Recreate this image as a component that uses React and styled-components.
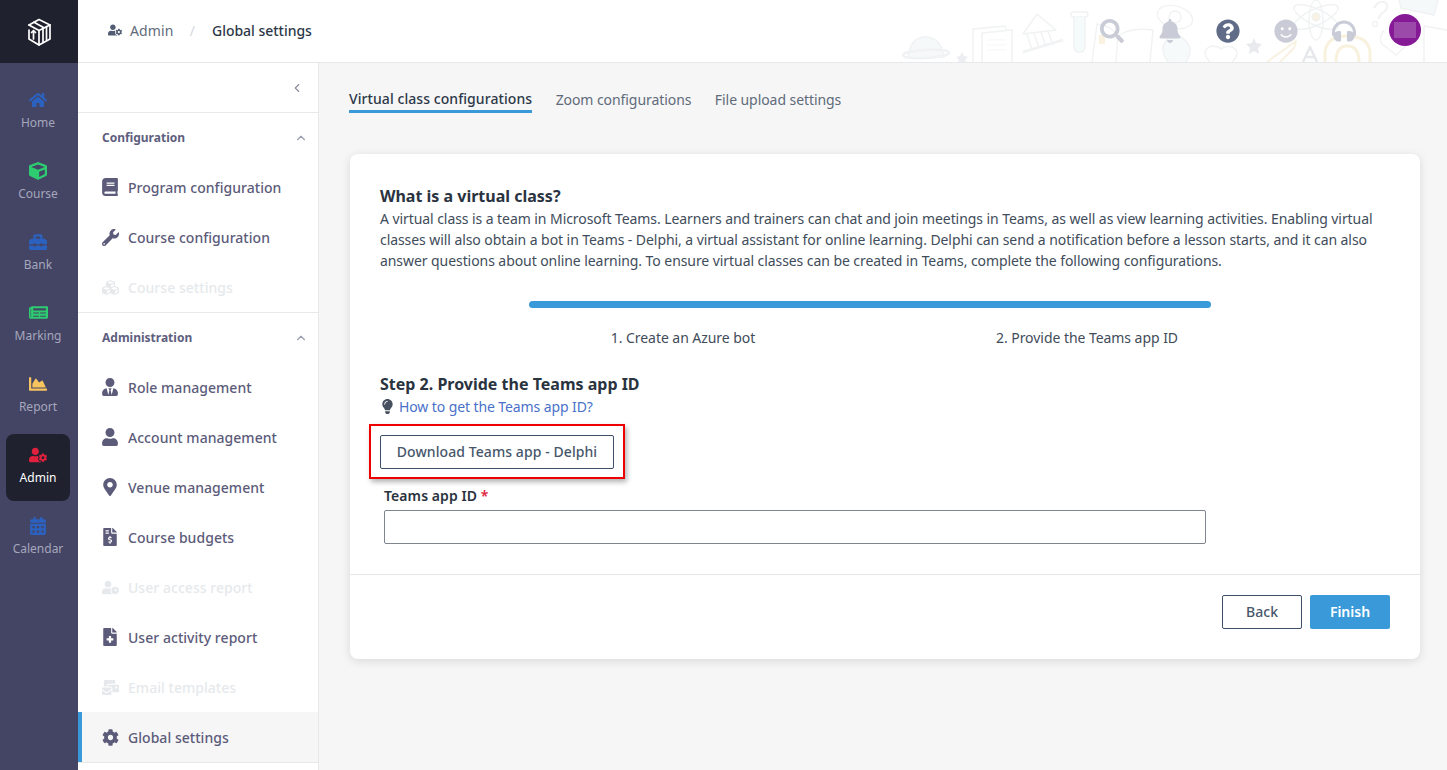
import React from 'react';
import styled, { createGlobalStyle } from 'styled-components';
import {
  FaHome, FaCube, FaToolbox, FaNewspaper, FaChartArea, FaUserCog, FaCalendarAlt,
  FaBook, FaWrench, FaCubes, FaUserTie, FaUser, FaMapMarkerAlt, FaFileInvoiceDollar,
  FaUserClock, FaFileMedical, FaMailBulk, FaCog, FaSearch, FaBell, FaQuestionCircle,
  FaSmile, FaHeadphones, FaLightbulb,
} from 'react-icons/fa';
import { FiChevronLeft, FiChevronUp } from 'react-icons/fi';

const GlobalStyle = createGlobalStyle`
  html, body { margin: 0; padding: 0; height: 100%; overflow: hidden; }
  body { font-family: "Noto Sans", "Open Sans", "Liberation Sans", sans-serif; background: #f6f6f6; }
  * { box-sizing: border-box; }
`;

const Page = styled.div`
  display: flex;
  width: 1447px;
  height: 770px;
  overflow: hidden;
`;

const Rail = styled.nav`
  width: 78px;
  flex-shrink: 0;
  background: #444565;
`;

const LogoBlock = styled.div`
  height: 63px;
  background: #20212f;
  display: flex;
  align-items: center;
  justify-content: center;
`;

const RailList = styled.div`
  display: flex;
  flex-direction: column;
  gap: 4px;
  padding: 16px 8px 0 6px;
`;

const RailItem = styled.div`
  height: 67px;
  border-radius: 8px;
  display: flex;
  flex-direction: column;
  align-items: center;
  padding-top: 11px;
  background: ${p => (p.$active ? '#20212f' : 'transparent')};
  color: ${p => (p.$active ? '#ffffff' : '#a5a7bc')};
  font-size: 12px;
  line-height: 18px;
  svg { color: ${p => p.$color}; display: block; }
`;

const RailIcon = styled.div`
  height: 19px;
  display: flex;
  align-items: center;
  margin-bottom: 5px;
`;

const Right = styled.div`
  flex: 1;
  display: flex;
  flex-direction: column;
  min-width: 0;
`;

const Header = styled.header`
  position: relative;
  height: 63px;
  flex-shrink: 0;
  background: #ffffff;
  border-bottom: 1px solid #e7e8ea;
  display: flex;
  align-items: center;
  justify-content: space-between;
  padding: 0 26px 2px 30px;
`;

const Doodles = styled.svg`
  position: absolute;
  right: 0;
  top: 0;
  width: 567px;
  height: 62px;
`;

const Crumbs = styled.div`
  display: flex;
  align-items: center;
  font-size: 14px;
  color: #5f6b7a;
  letter-spacing: 0.15px;
  svg { color: #525c74; margin-right: 8px; }
`;

const CrumbSep = styled.span`
  color: #d5d7db;
  margin: 0 17px 0 16px;
`;

const CrumbCurrent = styled.span`
  color: #2c3848;
  font-weight: 500;
  letter-spacing: -0.03px;
`;

const HeaderIcons = styled.div`
  position: relative;
  display: flex;
  align-items: center;
`;

const HeaderIcon = styled.div`
  width: 58px;
  padding-top: 1px;
  display: flex;
  justify-content: center;
  color: ${p => p.$color || '#c9ccd6'};
`;

const Avatar = styled.div`
  width: 32px;
  height: 32px;
  border-radius: 50%;
  margin-left: 16px;
  background: #861a96;
  display: flex;
  align-items: center;
  justify-content: center;
  &::after {
    content: '';
    width: 22px;
    height: 16px;
    background: #9b4aaa;
  }
`;

const Body = styled.div`
  flex: 1;
  display: flex;
  min-height: 0;
`;

const Sidebar = styled.aside`
  width: 241px;
  flex-shrink: 0;
  background: #ffffff;
  border-right: 1px solid #e7e8ea;
`;

const CollapseRow = styled.div`
  height: 50px;
  border-bottom: 1px solid #e7e8ea;
  display: flex;
  align-items: center;
  justify-content: flex-end;
  padding: 0 14px 0 0;
  color: #8a8ea3;
`;

const Group = styled.div`
  border-bottom: 1px solid #e7e8ea;
`;

const GroupTitle = styled.div`
  height: 49px;
  display: flex;
  align-items: center;
  justify-content: space-between;
  padding: 0 10px 0 24px;
  font-size: 12px;
  font-weight: 700;
  color: #5e5e7e;
  svg { color: #9a9db0; }
`;

const MenuItem = styled.div`
  height: 50px;
  display: flex;
  align-items: center;
  gap: 10px;
  padding-left: ${p => (p.$active ? '20px' : '24px')};
  border-left: ${p => (p.$active ? '4px solid #3a9ad9' : 'none')};
  background: ${p => (p.$active ? '#f6f6f6' : 'transparent')};
  font-size: 14px;
  font-weight: 500;
  letter-spacing: 0.04px;
  color: ${p => (p.$disabled ? '#e6e9ec' : '#5c5b7a')};
`;

const MenuIcon = styled.span`
  width: 16px;
  display: flex;
  justify-content: center;
  svg { flex-shrink: 0; }
`;

const Main = styled.main`
  flex: 1;
  min-width: 0;
  padding: 0 27px 0 30px;
  background: #f6f6f6;
`;

const Tabs = styled.div`
  display: flex;
  gap: 23.5px;
  padding-top: 24px;
  margin-bottom: 41px;
`;

const Tab = styled.div`
  height: 26px;
  font-size: 14px;
  line-height: 23px;
  padding-top: ${p => (p.$active ? '0' : '1px')};
  white-space: nowrap;
  font-weight: ${p => (p.$active ? 500 : 400)};
  letter-spacing: ${p => (p.$active ? '0.07px' : '-0.07px')};
  color: ${p => (p.$active ? '#2c3848' : '#5f6b7a')};
  border-bottom: 3px solid ${p => (p.$active ? '#3a9ad9' : 'transparent')};
`;

const Card = styled.section`
  width: 1070px;
  height: 505px;
  margin-left: 1px;
  background: #ffffff;
  border-radius: 8px;
  box-shadow: 0 2px 10px rgba(0, 0, 0, 0.12);
  display: flex;
  flex-direction: column;
`;

const CardBody = styled.div`
  flex: 1;
  padding: 30px 30px 0;
  border-bottom: 1px solid #e5e6e8;
`;

const Title = styled.h2`
  margin: 0;
  font-size: 16px;
  line-height: 24px;
  font-weight: 700;
  color: #2a3340;
`;

const Para = styled.p`
  margin: 0;
  font-size: 14px;
  line-height: 21px;
  letter-spacing: -0.07px;
  color: #414c5a;
`;

const Progress = styled.div`
  width: 682px;
  height: 7px;
  margin: 30px 0 0 149px;
  border-radius: 4px;
  background: #3a9ad9;
`;

const StepLabels = styled.div`
  display: grid;
  grid-template-columns: 404px 404px;
  margin: 19px 0 0 101px;
  font-size: 14px;
  line-height: 21px;
  letter-spacing: -0.05px;
  color: #414c5a;
  text-align: center;
`;

const Section = styled.div`
  margin-top: 24px;
`;

const HelpLink = styled.div`
  display: flex;
  align-items: center;
  gap: 4px;
  height: 21px;
  font-size: 14px;
  letter-spacing: -0.1px;
  color: #4a71c9;
  svg { color: #47505e; }
`;

const DownloadWrap = styled.div`
  position: relative;
  width: 234px;
  margin-top: 18px;
`;

const Highlight = styled.div`
  position: absolute;
  left: -11px;
  top: -11px;
  width: 256px;
  height: 55px;
  border: 2px solid #ee0000;
  box-shadow: 2px 3px 5px rgba(0, 0, 0, 0.3);
  pointer-events: none;
`;

const OutlineButton = styled.button`
  display: block;
  width: ${p => p.$width || '80px'};
  height: 34px;
  padding: 0 0 2px;
  font: 500 14px "Noto Sans", "Open Sans", sans-serif;
  letter-spacing: 0.08px;
  color: #47566a;
  background: #ffffff;
  border: 1px solid #3f5169;
  border-radius: 2px;
`;

const PrimaryButton = styled.button`
  display: block;
  width: 80px;
  height: 34px;
  padding: 0 0 2px;
  font: 600 14px "Noto Sans", "Open Sans", sans-serif;
  color: #ffffff;
  background: #3a9ad9;
  border: none;
  border-radius: 2px;
`;

const Field = styled.div`
  margin: 16px 0 0 4px;
`;

const FieldLabel = styled.label`
  display: block;
  height: 25px;
  font-size: 14px;
  line-height: 21px;
  font-weight: 600;
  letter-spacing: 0.08px;
  color: #2a3340;
  span { color: #e0203c; }
`;

const Input = styled.input`
  display: block;
  width: 822px;
  height: 34px;
  background: #ffffff;
  border: 1px solid #7f858e;
  border-radius: 2px;
`;

const Footer = styled.div`
  height: 84px;
  display: flex;
  justify-content: flex-end;
  gap: 8px;
  padding: 20px 30px 0 0;
`;

const Logo = () => (
  <svg width="24" height="28" viewBox="0 0 24 28" fill="none" stroke="#fff" strokeWidth="1.7" strokeLinejoin="round" strokeLinecap="round">
    <path d="M2 7 L12 1.5 L23 7 V21 L12 27 L2 21 V12" />
    <path d="M2 7 L12 12.5 L23 7" />
    <path d="M7 4.2 L17 9.7" />
    <path d="M12 12.5 V27" />
    <path d="M16 10 V24 M19.5 8.5 V22" />
    <path d="M6.5 21 V12.5 M4.5 14.5 L6.5 12.5 L8.5 14.5" />
  </svg>
);

const HeaderDoodles = () => (
  <Doodles viewBox="880 0 567 62" fill="none" stroke="#f0f2f3" strokeWidth="1.4" strokeLinejoin="round">
    {/* planet + ring */}
    <path d="M908 58 Q910 37 926 37 Q942 38 944 58" fill="#f6f9fa" />
    <ellipse cx="926" cy="54" rx="23" ry="4" transform="rotate(-3 926 54)" strokeWidth="2.4" />
    <path d="M962 52 l2 4 4 1 -3 3 1 3 -4 -1 -4 1 1 -3 -3 -3 4 -1 Z" fill="#eceef1" stroke="none" />
    {/* papers */}
    <path d="M973 62 V29 L1005 26 L1007 31" />
    <path d="M982 62 V33 L1012 30 V62" />
    <path d="M987 40 H1006 M987 45 H1006 M987 50 H1006" strokeWidth="0.7" />
    {/* temple */}
    <path d="M1023 34 L1037 14 L1056 30 Z" />
    <path d="M1027 34 L1032 50 M1034 33 L1039 48 M1041 32 L1046 47 M1048 31 L1053 45" />
    <path d="M1023 52 L1063 40" strokeWidth="2.4" />
    {/* test tube */}
    <rect x="1071" y="12" width="17" height="5" rx="2.5" />
    <path d="M1074 17 V47 a5.5 5.5 0 0 0 11 0 V17" fill="#f5fafa" />
    {/* book */}
    <path d="M1092 62 L1097 24 Q1112 26 1118 36 Q1130 27 1153 30 L1150 62" />
    <path d="M1118 36 L1116 62" />
    <rect x="1099" y="35" width="6" height="9" fill="#fbf1e0" stroke="none" />
    {/* eye + bulb */}
    <ellipse cx="1175" cy="17" rx="18" ry="11" transform="rotate(15 1175 17)" />
    <circle cx="1175" cy="17" r="6" />
    <path d="M1168 62 Q1155 44 1175 34 Q1198 44 1186 62" fill="#f6fafa" />
    {/* apple */}
    <path d="M1210 62 Q1199 50 1212 46 Q1218 46 1221 49 Q1226 45 1232 47 Q1242 52 1232 62" />
    <path d="M1254 38 l2 5 6 1 -4 4 1 6 -5 -3 -5 3 1 -6 -4 -4 6 -1 Z" fill="#e8eaee" stroke="none" />
    {/* pencil */}
    <path d="M1267 62 L1296 41 L1294 48 L1280 62" stroke="#f8f2e2" strokeWidth="2" />
    {/* atom */}
    <ellipse cx="1316" cy="17" rx="24" ry="8" transform="rotate(25 1316 17)" />
    <ellipse cx="1316" cy="17" rx="24" ry="8" transform="rotate(-25 1316 17)" />
    <ellipse cx="1316" cy="20" rx="7" ry="20" />
    <circle cx="1316" cy="17" r="4" fill="#f8f2e2" />
    <path d="M1303 62 L1310 47 L1317 62 M1306 57 H1314" stroke="#e6e8ec" strokeWidth="2.4" />
    {/* protractor */}
    <path d="M1325 62 V52 Q1327 36 1347 36 Q1368 36 1370 52 V62" stroke="#f8f1de" strokeWidth="3" />
    <path d="M1336 62 Q1336 46 1347 46 Q1359 46 1359 62" stroke="#f8f1de" strokeWidth="3" />
    {/* question mark */}
    <path d="M1374 8 Q1379 -1 1386 3 Q1390 9 1381 14 L1378 19" strokeWidth="2" />
    <circle cx="1375" cy="24" r="2.5" />
    {/* cards */}
    <path d="M1399 0 L1401 8 L1434 15 L1438 0" fill="#f5f9f9" />
    <path d="M1384 30 Q1376 42 1386 47 L1396 55 L1408 44" />
    <path d="M1424 62 V26 L1447 30" />
  </Doodles>
);

const railItems = [
  { label: 'Home', Icon: FaHome, color: '#2c62bf', size: 18 },
  { label: 'Course', Icon: FaCube, color: '#2ecc71', size: 18 },
  { label: 'Bank', Icon: FaToolbox, color: '#2c62bf', size: 18 },
  { label: 'Marking', Icon: FaNewspaper, color: '#2ecc71', size: 19 },
  { label: 'Report', Icon: FaChartArea, color: '#f7c45e', size: 18 },
  { label: 'Admin', Icon: FaUserCog, color: '#e0203c', size: 18, active: true },
  { label: 'Calendar', Icon: FaCalendarAlt, color: '#2c62bf', size: 18 },
];

const configItems = [
  { label: 'Program configuration', Icon: FaBook, size: 18 },
  { label: 'Course configuration', Icon: FaWrench, size: 17 },
  { label: 'Course settings', Icon: FaCubes, size: 17, disabled: true },
];

const adminItems = [
  { label: 'Role management', Icon: FaUserTie, size: 18 },
  { label: 'Account management', Icon: FaUser, size: 18 },
  { label: 'Venue management', Icon: FaMapMarkerAlt, size: 18 },
  { label: 'Course budgets', Icon: FaFileInvoiceDollar, size: 18 },
  { label: 'User access report', Icon: FaUserClock, size: 17, disabled: true },
  { label: 'User activity report', Icon: FaFileMedical, size: 18 },
  { label: 'Email templates', Icon: FaMailBulk, size: 17, disabled: true },
  { label: 'Global settings', Icon: FaCog, size: 17, active: true },
];

const renderMenu = (items) => items.map(({ label, Icon, size, disabled, active }) => (
  <MenuItem key={label} $disabled={disabled} $active={active}>
    <MenuIcon><Icon size={size} /></MenuIcon>
    {label}
  </MenuItem>
));

const App = () => {
  return (
    <Page>
      <GlobalStyle />
      <Rail>
        <LogoBlock><Logo /></LogoBlock>
        <RailList>
          {railItems.map(({ label, Icon, color, size, active }) => (
            <RailItem key={label} $active={active} $color={color}>
              <RailIcon><Icon size={size} /></RailIcon>
              {label}
            </RailItem>
          ))}
        </RailList>
      </Rail>
      <Right>
        <Header>
          <HeaderDoodles />
          <Crumbs>
            <FaUserCog size={14} />
            Admin
            <CrumbSep>/</CrumbSep>
            <CrumbCurrent>Global settings</CrumbCurrent>
          </Crumbs>
          <HeaderIcons>
            <HeaderIcon><FaSearch size={24} /></HeaderIcon>
            <HeaderIcon><FaBell size={24} /></HeaderIcon>
            <HeaderIcon $color="#5f6b87"><FaQuestionCircle size={24} /></HeaderIcon>
            <HeaderIcon><FaSmile size={24} /></HeaderIcon>
            <HeaderIcon><FaHeadphones size={24} /></HeaderIcon>
            <Avatar />
          </HeaderIcons>
        </Header>
        <Body>
          <Sidebar>
            <CollapseRow><FiChevronLeft size={14} /></CollapseRow>
            <Group>
              <GroupTitle>Configuration<FiChevronUp size={14} /></GroupTitle>
              {renderMenu(configItems)}
            </Group>
            <Group>
              <GroupTitle>Administration<FiChevronUp size={14} /></GroupTitle>
              {renderMenu(adminItems)}
            </Group>
          </Sidebar>
          <Main>
            <Tabs>
              <Tab $active>Virtual class configurations</Tab>
              <Tab>Zoom configurations</Tab>
              <Tab>File upload settings</Tab>
            </Tabs>
            <Card>
              <CardBody>
                <Title>What is a virtual class?</Title>
                <Para>
                  A virtual class is a team in Microsoft Teams. Learners and trainers can chat and join meetings in Teams, as well as view learning activities. Enabling virtual classes will also obtain a bot in Teams - Delphi, a virtual assistant for online learning. Delphi can send a notification before a lesson starts, and it can also answer questions about online learning. To ensure virtual classes can be created in Teams, complete the following configurations.
                </Para>
                <Progress />
                <StepLabels>
                  <div>1. Create an Azure bot</div>
                  <div>2. Provide the Teams app ID</div>
                </StepLabels>
                <Section>
                  <Title>Step 2. Provide the Teams app ID</Title>
                  <HelpLink><FaLightbulb size={15} />How to get the Teams app ID?</HelpLink>
                  <DownloadWrap>
                    <OutlineButton $width="234px">Download Teams app - Delphi</OutlineButton>
                    <Highlight />
                  </DownloadWrap>
                  <Field>
                    <FieldLabel>Teams app ID <span>*</span></FieldLabel>
                    <Input />
                  </Field>
                </Section>
              </CardBody>
              <Footer>
                <OutlineButton>Back</OutlineButton>
                <PrimaryButton>Finish</PrimaryButton>
              </Footer>
            </Card>
          </Main>
        </Body>
      </Right>
    </Page>
  );
};

export default App;
